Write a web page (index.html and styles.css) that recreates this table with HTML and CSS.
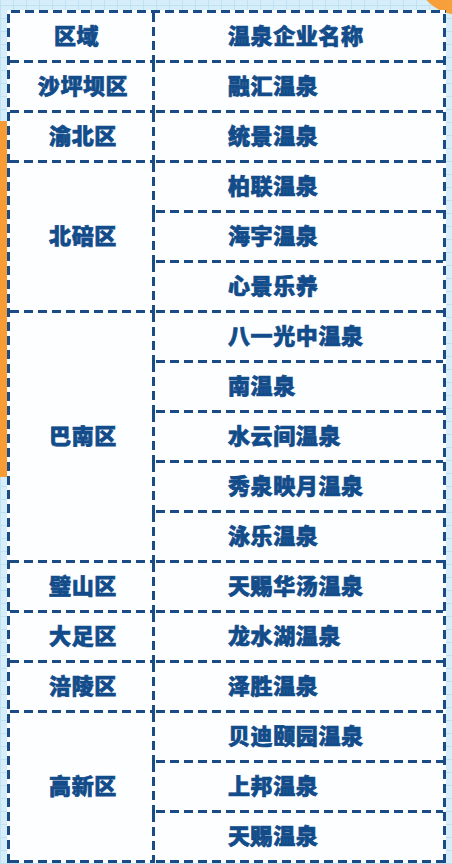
FILE: index.html
```html
<!DOCTYPE html>
<html lang="zh">
<head>
<meta charset="utf-8">
<link rel="stylesheet" href="styles.css">
</head>
<body>
<div class="page">
  <div class="stripe"></div>
  <div class="blob"></div>
  <div class="table">
    <div class="c l head" style="grid-row: 1;">区域</div>
    <div class="c r" style="grid-row: 1;">温泉企业名称</div>

    <div class="c l" style="grid-row: 2;">沙坪坝区</div>
    <div class="c r" style="grid-row: 2;">融汇温泉</div>

    <div class="c l" style="grid-row: 3;">渝北区</div>
    <div class="c r" style="grid-row: 3;">统景温泉</div>

    <div class="c l" style="grid-row: 4 / span 3;">北碚区</div>
    <div class="c r" style="grid-row: 4;">柏联温泉</div>
    <div class="c r" style="grid-row: 5;">海宇温泉</div>
    <div class="c r" style="grid-row: 6;">心景乐养</div>

    <div class="c l" style="grid-row: 7 / span 5;">巴南区</div>
    <div class="c r" style="grid-row: 7;">八一光中温泉</div>
    <div class="c r" style="grid-row: 8;">南温泉</div>
    <div class="c r" style="grid-row: 9;">水云间温泉</div>
    <div class="c r" style="grid-row: 10;">秀泉映月温泉</div>
    <div class="c r" style="grid-row: 11;">泳乐温泉</div>

    <div class="c l" style="grid-row: 12;">璧山区</div>
    <div class="c r" style="grid-row: 12;">天赐华汤温泉</div>

    <div class="c l" style="grid-row: 13;">大足区</div>
    <div class="c r" style="grid-row: 13;">龙水湖温泉</div>

    <div class="c l" style="grid-row: 14;">涪陵区</div>
    <div class="c r" style="grid-row: 14;">泽胜温泉</div>

    <div class="c l" style="grid-row: 15 / span 3;">高新区</div>
    <div class="c r" style="grid-row: 15;">贝迪颐园温泉</div>
    <div class="c r" style="grid-row: 16;">上邦温泉</div>
    <div class="c r" style="grid-row: 17;">天赐温泉</div>
  </div>
</div>
</body>
</html>
```

FILE: styles.css
```css
html, body {
  margin: 0;
  padding: 0;
}

body {
  width: 452px;
  height: 864px;
  overflow: hidden;
  background-color: #d5eefa;
  background-image:
    repeating-linear-gradient(90deg, #bfe2f3 0 1px, transparent 1px 13px),
    repeating-linear-gradient(0deg, #bfe2f3 0 1px, transparent 1px 13px);
  font-family: "Noto Sans CJK SC", "Noto Sans", sans-serif;
}

.page {
  position: relative;
  width: 452px;
  height: 864px;
  padding: 10px 0 0 7px;
  box-sizing: border-box;
  overflow: hidden;
}

.stripe {
  position: absolute;
  left: 0;
  top: 121px;
  width: 7px;
  height: 356px;
  background: #f79b35;
}

.blob {
  position: absolute;
  left: 415px;
  top: -75px;
  width: 90px;
  height: 90px;
  border-radius: 50%;
  background: #f7a03b;
}

.table {
  position: relative;
  width: 439px;
  height: 853px;
  box-sizing: border-box;
  padding: 3px 3px 0 3px;
  background-color: #fdfeff;
  background-image:
    repeating-linear-gradient(90deg, #1b4b84 0 9px, transparent 9px 14px),
    repeating-linear-gradient(180deg, #1b4b84 0 9px, transparent 9px 14px),
    repeating-linear-gradient(180deg, #1b4b84 0 9px, transparent 9px 14px);
  background-size: 100% 3px, 3px 100%, 3px 100%;
  background-position: 4px 0, 0 4px, right 4px;
  background-repeat: no-repeat;
  display: grid;
  grid-template-columns: 142px 291px;
  grid-template-rows: repeat(17, 50px);
}

.c {
  display: flex;
  align-items: center;
  box-sizing: border-box;
  padding-bottom: 8px;
  font-size: 22px;
  font-weight: 900;
  letter-spacing: 0.6px;
  color: #124c8a;
  -webkit-text-stroke: 0.7px #124c8a;
  line-height: 1;
  background-image:
    repeating-linear-gradient(90deg, #1b4b84 0 9px, transparent 9px 14px);
  background-size: 100% 3px;
  background-position: 0 bottom;
  background-repeat: no-repeat;
}

.l {
  grid-column: 1;
  justify-content: center;
  padding-left: 4px;
}

.l.head {
  padding-left: 0;
  padding-right: 9px;
}

.r {
  grid-column: 2;
  padding-left: 76px;
  background-image:
    repeating-linear-gradient(90deg, #1b4b84 0 9px, transparent 9px 14px),
    repeating-linear-gradient(180deg, #1b4b84 0 9px, transparent 9px 14px);
  background-size: 100% 3px, 3px 100%;
  background-position: 4px bottom, 0 0;
  background-repeat: no-repeat;
}
```
